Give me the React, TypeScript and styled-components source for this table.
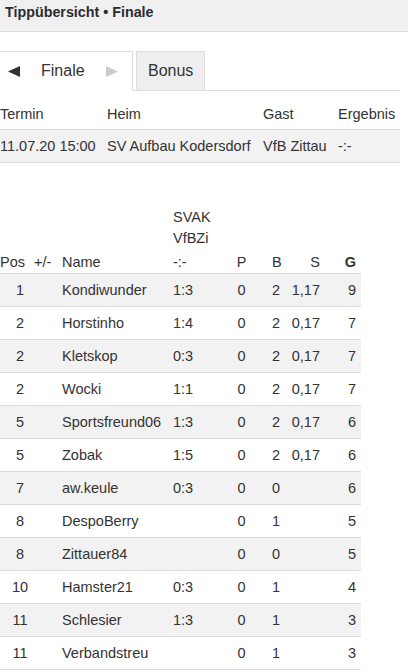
import styled, { createGlobalStyle } from 'styled-components';

const GlobalStyle = createGlobalStyle`
  body {
    margin: 0;
    background: #fff;
    color: #333;
    font-family: 'Liberation Sans', Arial, sans-serif;
  }
`;

type Rank = {
  pos: string;
  name: string;
  tipp: string;
  p: string;
  b: string;
  s: string;
  g: string;
};

const ranking: Rank[] = [
  { pos: '1', name: 'Kondiwunder', tipp: '1:3', p: '0', b: '2', s: '1,17', g: '9' },
  { pos: '2', name: 'Horstinho', tipp: '1:4', p: '0', b: '2', s: '0,17', g: '7' },
  { pos: '2', name: 'Kletskop', tipp: '0:3', p: '0', b: '2', s: '0,17', g: '7' },
  { pos: '2', name: 'Wocki', tipp: '1:1', p: '0', b: '2', s: '0,17', g: '7' },
  { pos: '5', name: 'Sportsfreund06', tipp: '1:3', p: '0', b: '2', s: '0,17', g: '6' },
  { pos: '5', name: 'Zobak', tipp: '1:5', p: '0', b: '2', s: '0,17', g: '6' },
  { pos: '7', name: 'aw.keule', tipp: '0:3', p: '0', b: '0', s: '', g: '6' },
  { pos: '8', name: 'DespoBerry', tipp: '', p: '0', b: '1', s: '', g: '5' },
  { pos: '8', name: 'Zittauer84', tipp: '', p: '0', b: '0', s: '', g: '5' },
  { pos: '10', name: 'Hamster21', tipp: '0:3', p: '0', b: '1', s: '', g: '4' },
  { pos: '11', name: 'Schlesier', tipp: '1:3', p: '0', b: '1', s: '', g: '3' },
  { pos: '11', name: 'Verbandstreu', tipp: '', p: '0', b: '1', s: '', g: '3' },
];

function App() {
  return (
    <>
      <GlobalStyle />
      <TitleBar>
        <Title>Tippübersicht • Finale</Title>
      </TitleBar>
      <Content>
        <Tabs>
          <Tab $active>
            <Arrow viewBox="0 0 12 11">
              <polygon points="0,5.5 12,0 12,11" fill="#333" />
            </Arrow>
            <span>Finale</span>
            <Arrow viewBox="0 0 12 11">
              <polygon points="12,5.5 0,0 0,11" fill="#ccc" />
            </Arrow>
          </Tab>
          <Tab>Bonus</Tab>
        </Tabs>

        <MatchHead>
          <span>Termin</span>
          <span>Heim</span>
          <span>Gast</span>
          <span>Ergebnis</span>
        </MatchHead>
        <MatchRow>
          <span>11.07.20 15:00</span>
          <span>SV Aufbau Kodersdorf</span>
          <span>VfB Zittau</span>
          <span>-:-</span>
        </MatchRow>

        <Ranking>
          <RankHead>
            <HeadCell>Pos</HeadCell>
            <HeadCell>+/-</HeadCell>
            <HeadCell>Name</HeadCell>
            <HeadCell>
              <TippLine>SVAK</TippLine>
              <TippLine>VfBZi</TippLine>
              <TippScore>-:-</TippScore>
            </HeadCell>
            <HeadCell $align="center">P</HeadCell>
            <HeadCell $pad="14px">B</HeadCell>
            <HeadCell $align="right">S</HeadCell>
            <HeadCell $align="right" $bold>G</HeadCell>
          </RankHead>
          {ranking.map((r, i) => (
            <RankRow key={i} $striped={i % 2 === 0}>
              <PosCell>{r.pos}</PosCell>
              <Cell />
              <Cell>{r.name}</Cell>
              <Cell>{r.tipp}</Cell>
              <Cell $align="center">{r.p}</Cell>
              <Cell $pad="14px">{r.b}</Cell>
              <Cell $align="right">{r.s}</Cell>
              <Cell $align="right">{r.g}</Cell>
            </RankRow>
          ))}
        </Ranking>
      </Content>
    </>
  );
}

export default App;

const TitleBar = styled.div`
  box-sizing: border-box;
  height: 32px;
  padding: 2px 5px 0;
  background: #f0f0f0;
  border-bottom: 1px solid #dcdcdc;
`;

const Title = styled.h1`
  margin: 0;
  font-size: 14.3px;
  line-height: 20px;
  font-weight: bold;
  color: #2b2b30;
`;

const Content = styled.div`
  width: 400px;
`;

const Tabs = styled.div`
  display: flex;
  margin-top: 19px;
  border-bottom: 1px solid #ddd;
`;

const Tab = styled.div<{ $active?: boolean }>`
  box-sizing: border-box;
  height: 40px;
  display: flex;
  align-items: center;
  font-size: 16px;
  color: #333;
  margin-bottom: -1px;
  border: 1px solid #ddd;
  ${(p) =>
    p.$active
      ? `
    width: 133px;
    gap: 21px;
    padding: 0 0 0 8px;
    background: #fff;
    border-left: none;
    border-bottom-color: #fff;
  `
      : `
    margin-left: 3px;
    padding: 0 11px;
    background: #eee;
  `}
`;

const Arrow = styled.svg`
  width: 12px;
  height: 11px;
  flex: none;
`;

const matchColumns = '107px 156px 75px 1fr';

const MatchHead = styled.div`
  box-sizing: border-box;
  display: grid;
  grid-template-columns: ${matchColumns};
  align-items: end;
  height: 39px;
  padding-bottom: 5px;
  font-size: 14.5px;
  line-height: 20px;
  border-bottom: 1px solid #ddd;
`;

const MatchRow = styled.div`
  box-sizing: border-box;
  display: grid;
  grid-template-columns: ${matchColumns};
  align-items: center;
  height: 33px;
  font-size: 14.5px;
  background: #f2f2f2;
  border-bottom: 1px solid #ddd;
`;

const rankColumns = '34px 28px 111px 52px 33px 32px 30px 36px';

const Ranking = styled.div`
  width: 361px;
  margin-top: 44px;
  font-size: 14.5px;
`;

const RankHead = styled.div`
  display: grid;
  grid-template-columns: ${rankColumns};
  align-items: end;
  padding-bottom: 1px;
  border-bottom: 1px solid #ddd;
  line-height: 20px;
`;

const HeadCell = styled.div<{ $align?: string; $pad?: string; $bold?: boolean }>`
  text-align: ${(p) => p.$align || 'left'};
  padding-left: ${(p) => p.$pad || '0'};
  font-weight: ${(p) => (p.$bold ? 'bold' : 'normal')};
`;

const TippLine = styled.div`
  line-height: 21px;
`;

const TippScore = styled.div`
  margin-top: 3px;
`;

const RankRow = styled.div<{ $striped: boolean }>`
  box-sizing: border-box;
  display: grid;
  grid-template-columns: ${rankColumns};
  align-items: center;
  height: 33px;
  background: ${(p) => (p.$striped ? '#f2f2f2' : '#fff')};
  border-bottom: 1px solid #ddd;
`;

const Cell = styled.div<{ $align?: string; $pad?: string }>`
  text-align: ${(p) => p.$align || 'left'};
  padding-left: ${(p) => p.$pad || '0'};
  white-space: nowrap;
`;

const PosCell = styled(Cell)`
  text-align: center;
  padding-left: 6px;
`;
